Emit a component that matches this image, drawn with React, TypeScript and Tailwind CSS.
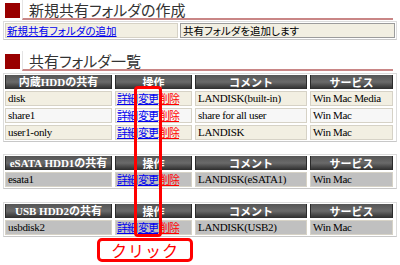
const serif = { fontFamily: '"Liberation Serif", "Noto Sans CJK JP", serif' };
const gothic = { fontFamily: '"Noto Sans CJK JP", "Liberation Sans", sans-serif' };

interface ShareRow {
  name: string;
  comment: string;
  service: string;
  bg: string;
}

const SectionTitle = ({ title }: { title: string }) => (
  <div className="flex items-start h-[20px]">
    <div className="ml-[5px] mt-[3px] w-[15px] h-[15px] bg-[#990000]" />
    <div className="ml-[2px] mr-[7px] flex-1 h-[20px] border-l border-[#e4e4e4] border-b-2 border-b-[#c98686] pl-[6px]">
      <span className="block text-[15px] leading-[19px] text-[#333] [font-feature-settings:'palt']" style={gothic}>
        {title}
      </span>
    </div>
  </div>
);

const ShareTable = ({ label, rows }: { label: string; rows: ShareRow[] }) => {
  const head =
    "h-[14px] flex items-center justify-center whitespace-nowrap text-white font-bold text-[11px] leading-none bg-gradient-to-b from-[#555] via-[#6a6a6a] to-[#2e2e2e] border-x border-[#2a2a2a]";
  const cell = "h-[15px] flex items-center whitespace-nowrap overflow-hidden px-[2px] text-[11px] tracking-[-0.3px] text-black border border-[#d6d2c6]";
  return (
    <div className="mx-[3px] border border-[#dcdcdc] border-b-[#c8c8c8] bg-white p-[1px]">
      <div className="grid grid-cols-[107px_77px_112px_83px] gap-x-[3px] gap-y-[2px]">
        <div className={head} style={serif}>{label}</div>
        <div className={head} style={gothic}>操作</div>
        <div className={head} style={gothic}>コメント</div>
        <div className={head} style={gothic}>サービス</div>
        {rows.map((r) => (
          <>
            <div key={r.name + "a"} className={`${cell} ${r.bg}`} style={serif}>
              {r.name}
            </div>
            <div key={r.name + "b"} className={`h-[15px] flex items-center gap-[1px] px-[1px] text-[11px] tracking-[-1px] whitespace-nowrap border border-[#d6d2c6] ${r.bg}`} style={gothic}>
              <a className="text-[#0000ee] underline">詳細</a>
              <a className="text-[#0000ee] underline">変更</a>
              <a className="text-[#ff0000] underline">削除</a>
            </div>
            <div key={r.name + "c"} className={`${cell} ${r.bg}`} style={serif}>
              {r.comment}
            </div>
            <div key={r.name + "d"} className={`${cell} ${r.bg}`} style={serif}>
              {r.service}
            </div>
          </>
        ))}
      </div>
    </div>
  );
};

export default function App() {
  return (
    <div className="relative w-[400px] h-[265px] bg-white overflow-hidden">
      <SectionTitle title="新規共有フォルダの作成" />
      <div className="mt-[1px] mx-[3px] border border-[#dcdcdc] border-b-[#c8c8c8] bg-white p-[1px] flex gap-[2px]">
        <div className="w-[173px] h-[15px] flex items-center px-[1px] bg-[#f2efe2] border border-[#d6d2c6] text-[10.5px] whitespace-nowrap [font-feature-settings:'palt']" style={gothic}>
          <a className="text-[#0000ee] underline">新規共有フォルダの追加</a>
        </div>
        <div className="flex-1 h-[15px] flex items-center px-[2px] bg-[#f2efe2] border border-[#9c9c9c] text-[10.5px] whitespace-nowrap text-black [font-feature-settings:'palt']" style={gothic}>
          共有フォルダを追加します
        </div>
      </div>

      <div className="mt-[11px]">
        <SectionTitle title="共有フォルダ一覧" />
      </div>
      <div className="mt-[2px]">
        <ShareTable
          label="内蔵HDDの共有"
          rows={[
            { name: "disk", comment: "LANDISK(built-in)", service: "Win Mac Media", bg: "bg-[#f2efe2]" },
            { name: "share1", comment: "share for all user", service: "Win Mac", bg: "bg-[#f7f7f7]" },
            { name: "user1-only", comment: "LANDISK", service: "Win Mac", bg: "bg-[#f2efe2]" },
          ]}
        />
      </div>
      <div className="mt-[12px]">
        <ShareTable
          label="eSATA HDD1の共有"
          rows={[{ name: "esata1", comment: "LANDISK(eSATA1)", service: "Win Mac", bg: "bg-[#c0c0c0]" }]}
        />
      </div>
      <div className="mt-[13px]">
        <ShareTable
          label="USB HDD2の共有"
          rows={[{ name: "usbdisk2", comment: "LANDISK(USB2)", service: "Win Mac", bg: "bg-[#c0c0c0]" }]}
        />
      </div>

      <div className="absolute left-[134px] top-[86px] w-[28px] h-[151px] rounded-[4px] border-[3px] border-[#ff0000]" />
      <div className="absolute left-[97px] top-[238px] w-[96px] h-[24px] rounded-[5px] border-[3px] border-[#ff0000] bg-white flex items-center justify-center text-[#ff0000] text-[16px] tracking-[1px]" style={gothic}>
        クリック
      </div>
    </div>
  );
}
